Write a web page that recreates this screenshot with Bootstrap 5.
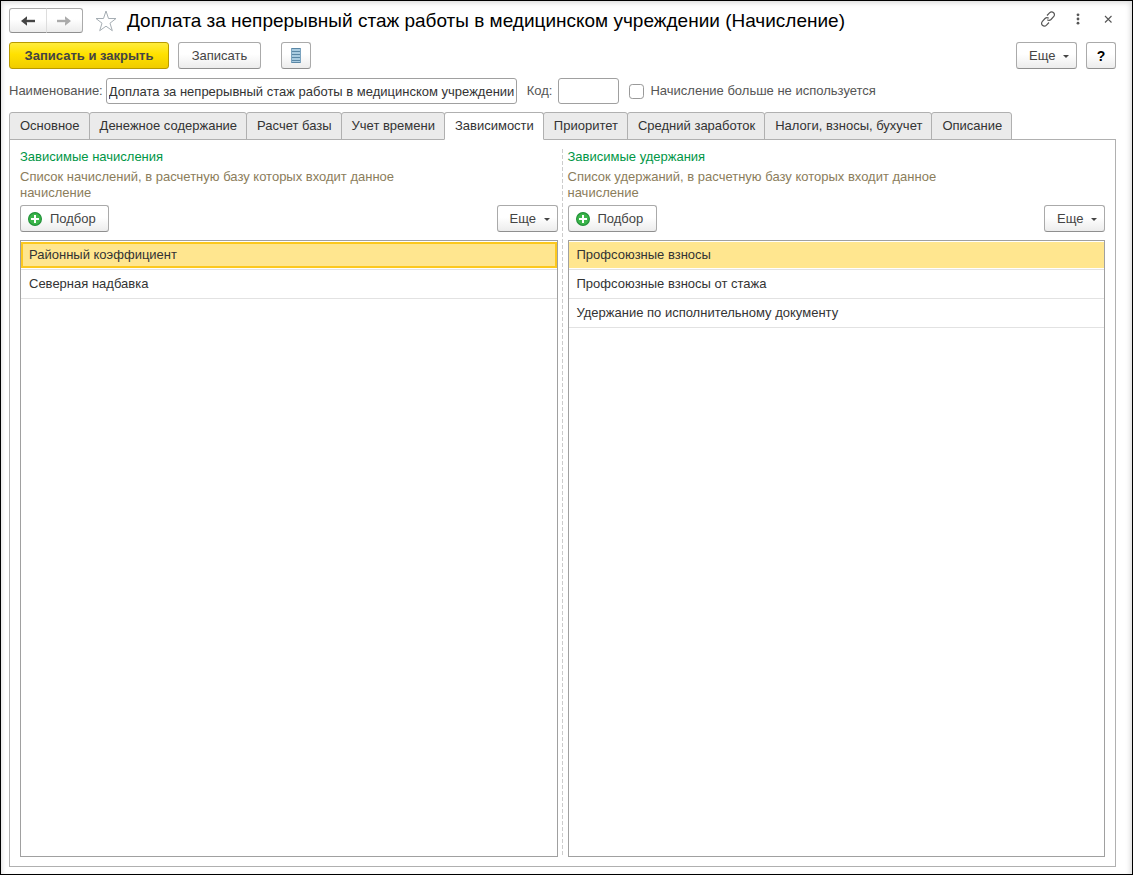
<!DOCTYPE html>
<html lang="ru">
<head>
<meta charset="utf-8">
<meta name="viewport" content="width=device-width, initial-scale=1">
<title>Доплата за непрерывный стаж работы (Начисление)</title>
<link href="https://cdn.jsdelivr.net/npm/bootstrap@5.3.0/dist/css/bootstrap.min.css" rel="stylesheet">
<style>
body { font: 13px/16px "Liberation Sans", Arial, sans-serif; color: #333; background: #fff; padding-bottom: 1px; }
.app-window { min-height: calc(100vh - 1px); border: 1px solid #000; padding: 7px 16px 7px 8px; box-shadow: inset -4px 4px 5px -2px #ddd, inset 3px 0 4px -2px #ddd; }
.title-row { height: 25px; margin-bottom: 9px; }
.title-row h1 { font-size: 19px; line-height: 24px; color: #000; margin-left: 10px; }
.command-bar { gap: 9px; margin-bottom: 9px; }
.form-btn { --bs-btn-font-size: 13px; --bs-btn-line-height: 16px; --bs-btn-border-radius: 3px; --bs-btn-color: #444; --bs-btn-border-color: #aaa; --bs-btn-hover-color: #222; --bs-btn-hover-border-color: #888;
  height: 27px; padding: 0 12px; background: linear-gradient(#fff 45%, #ececec); border-bottom-color: #8f8f8f; display: inline-flex; align-items: center; justify-content: center; white-space: nowrap; }
.form-btn.primary-cmd { background: linear-gradient(#ffec3d, #ffe100 45%, #f0cc00); border-color: #b89a00; color: #444; font-weight: 700; width: 160px; padding: 0; }
.nav-pair { width: 74px; }
.nav-pair .form-btn { height: 25px; padding: 0; }
.nav-pair .form-btn + .form-btn { border-left-color: #ddd; }
.save-btn { width: 83px; }
.square-btn { width: 30px; padding: 0; }
.help-btn { --bs-btn-font-size: 14px; }
.list-btn { margin-left: 11px; }
.more-btn { width: 61px; padding: 0 7px 0 12px; justify-content: space-between; }
.more-btn::after { border-width: 3px 3px 0; margin: 2px 0 0; color: #444; }
.pick-btn { width: 89px; padding: 0 7px; justify-content: flex-start; gap: 8px; }
.bare-btn { border: 0; background: none; padding: 0; line-height: 0; color: #555; }
.field-row { column-gap: 10px; }
.form-label, .form-check-label { color: #555; }
.field-box { height: 26px; padding: 0 0 0 2px; border: 1px solid #a0a0a0; border-radius: 3px; font-size: 13px; color: #333; min-height: 0; }
.name-box { width: 411px; margin-left: 3px; }
.code-box { width: 61px; margin-left: 6px; }
.tick-box { width: 15px; height: 15px; border-color: #999; border-radius: 2px; margin: 0 6px 0 0; }
.nav-tabs.form-tabs { --bs-nav-tabs-border-width: 0; }
.form-tabs .nav-link { height: 28px; padding: 0 9px 0 10px; border: 1px solid #b0b0b0; border-radius: 3px 3px 0 0; background: #ebebeb; color: #333; line-height: 26px; white-space: nowrap; margin: 0 0 -1px; }
.form-tabs .nav-item + .nav-item { margin-left: -1px; }
.form-tabs .nav-link.active { background: #fff; color: #333; border-color: #b0b0b0 #b0b0b0 #fff; position: relative; }
.tab-panel { border: 1px solid #b0b0b0; padding: 9px 10px; }
.divider { width: 10px; background: repeating-linear-gradient(#ccc 0 4px, #fff 4px 6px) 4px 0 / 1px 100% no-repeat; }
.pane { min-width: 0; }
.pane h2 { font-size: 13px; line-height: 16px; color: #009646; }
.hint { color: #8b7d5b; max-width: 400px; }
.list-frame { border: 1px solid #a0a0a0; }
.list-frame table { border-collapse: separate; border-spacing: 0; }
.list-frame td { height: 29px; padding: 0 8px; border-bottom: 1px solid #e2e2e2; }
.list-frame td.picked { padding: 1px 0; }
.picked div { height: 26px; line-height: 26px; padding: 0 8px; background: #ffe68f; }
.picked .has-focus { border: 2px solid #fcc81e; line-height: 22px; padding: 0 6px; }
</style>
</head>
<body>
<svg class="d-none">
  <symbol id="plus-icon" viewBox="0 0 14 14"><circle cx="7" cy="7" r="6.4" fill="#3bb54a" stroke="#23923a" stroke-width="1.2"/><path d="M7 3v8M3 7h8" stroke="#fff" stroke-width="2"/></symbol>
</svg>
<main class="app-window d-flex flex-column">
  <header class="title-row d-flex align-items-center">
    <div class="btn-group nav-pair">
      <button type="button" class="btn form-btn" aria-label="Назад"><svg width="16" height="12" viewBox="0 0 16 12"><path d="M5 6h10" stroke="#444" stroke-width="2.400"/><path d="M1 6l6-4.800v3L5.500 6 7 7.800v3z" fill="#444"/></svg></button>
      <button type="button" class="btn form-btn" aria-label="Вперед"><svg width="16" height="12" viewBox="0 0 16 12"><path d="M1 6h10" stroke="#aaa" stroke-width="2.400"/><path d="M15 6L9 1.200v3L10.500 6 9 7.800v3z" fill="#aaa"/></svg></button>
    </div>
    <button type="button" class="bare-btn ms-2 ps-1" aria-label="В избранное"><svg width="22" height="22" viewBox="0 0 22 22"><path d="M11 1l2.500 7.500H21l-6 4.700 2.300 7.500L11 16.200l-6.300 4.500L7 13.200 1 8.500h7.500z" fill="none" stroke="#a5adb3"/></svg></button>
    <h1 class="mb-0 fw-normal text-nowrap me-auto">Доплата за непрерывный стаж работы в медицинском учреждении (Начисление)</h1>
    <div class="d-flex align-items-center gap-3 pe-1 pb-1">
      <button type="button" class="bare-btn" aria-label="Ссылка"><svg width="16" height="16" viewBox="0 0 16 16" fill="none" stroke="#555" stroke-width="1.200"><path d="M7 4.500l2.500-2.600c1.200-1.200 3-1.200 4.100-.2s1.100 2.800 0 4L11 8.500c-1 1-2.600 1.100-3.700.3M9 11.500l-2.500 2.600c-1.200 1.200-3 1.200-4.100.2s-1.100-2.800 0-4L5 7.500c1-1 2.600-1.100 3.700-.3"/></svg></button>
      <button type="button" class="bare-btn px-1" aria-label="Меню"><svg width="4" height="12" viewBox="0 0 4 12" fill="#555"><circle cx="2" cy="1.800" r="1.400"/><circle cx="2" cy="6" r="1.400"/><circle cx="2" cy="10.200" r="1.400"/></svg></button>
      <button type="button" class="bare-btn ps-1" aria-label="Закрыть"><svg width="8" height="8" viewBox="0 0 8 8"><path d="M1 1l6.500 6.500M7.500 1L1 7.500" stroke="#555" stroke-width="1.100"/></svg></button>
    </div>
  </header>

  <div class="command-bar d-flex align-items-center">
    <button type="button" class="btn form-btn primary-cmd">Записать и закрыть</button>
    <button type="button" class="btn form-btn save-btn">Записать</button>
    <button type="button" class="btn form-btn square-btn list-btn me-auto" aria-label="Список"><svg width="12" height="15" viewBox="0 0 12 15"><path d="M1 0h10v15H1z" fill="#a9cbe0"/><path d="M1 .5h10M1 3.500h10M1 6.500h10M1 9.500h10M1 12.500h10M1 14.500h10" stroke="#5a87a5"/><path d="M1.500 0v15M10.500 0v15" stroke="#7ba3bf"/></svg></button>
    <button type="button" class="btn form-btn more-btn dropdown-toggle">Еще</button>
    <button type="button" class="btn form-btn square-btn help-btn fw-bold text-black">?</button>
  </div>

  <form class="field-row d-flex align-items-center mb-2">
    <div class="d-flex align-items-center">
      <label class="form-label mb-0" for="name">Наименование:</label>
      <input class="form-control field-box name-box" id="name" value="Доплата за непрерывный стаж работы в медицинском учреждении">
    </div>
    <div class="d-flex align-items-center">
      <label class="form-label mb-0" for="code">Код:</label>
      <input class="form-control field-box code-box" id="code">
    </div>
    <div class="d-flex align-items-center">
      <input class="form-check-input tick-box" type="checkbox" id="unused">
      <label class="form-check-label" for="unused">Начисление больше не используется</label>
    </div>
  </form>

  <ul class="nav nav-tabs form-tabs flex-nowrap" role="tablist">
    <li class="nav-item"><button type="button" class="nav-link" role="tab">Основное</button></li>
    <li class="nav-item"><button type="button" class="nav-link" role="tab">Денежное содержание</button></li>
    <li class="nav-item"><button type="button" class="nav-link" role="tab">Расчет базы</button></li>
    <li class="nav-item"><button type="button" class="nav-link" role="tab">Учет времени</button></li>
    <li class="nav-item"><button type="button" class="nav-link active" role="tab" aria-selected="true">Зависимости</button></li>
    <li class="nav-item"><button type="button" class="nav-link" role="tab">Приоритет</button></li>
    <li class="nav-item"><button type="button" class="nav-link" role="tab">Средний заработок</button></li>
    <li class="nav-item"><button type="button" class="nav-link" role="tab">Налоги, взносы, бухучет</button></li>
    <li class="nav-item"><button type="button" class="nav-link" role="tab">Описание</button></li>
  </ul>

  <div class="tab-panel d-flex flex-grow-1">
    <section class="pane d-flex flex-column flex-fill w-50">
      <h2 class="mb-1 fw-normal">Зависимые начисления</h2>
      <p class="hint mb-1">Список начислений, в расчетную базу которых входит данное начисление</p>
      <div class="d-flex justify-content-between mb-2">
        <button type="button" class="btn form-btn pick-btn"><svg width="14" height="14"><use href="#plus-icon"/></svg>Подбор</button>
        <button type="button" class="btn form-btn more-btn dropdown-toggle">Еще</button>
      </div>
      <div class="list-frame flex-grow-1">
        <table class="w-100">
          <tbody>
            <tr><td class="picked"><div class="has-focus">Районный коэффициент</div></td></tr>
            <tr><td>Северная надбавка</td></tr>
          </tbody>
        </table>
      </div>
    </section>
    <div class="divider flex-shrink-0"></div>
    <section class="pane d-flex flex-column flex-fill w-50">
      <h2 class="mb-1 fw-normal">Зависимые удержания</h2>
      <p class="hint mb-1">Список удержаний, в расчетную базу которых входит данное начисление</p>
      <div class="d-flex justify-content-between mb-2">
        <button type="button" class="btn form-btn pick-btn"><svg width="14" height="14"><use href="#plus-icon"/></svg>Подбор</button>
        <button type="button" class="btn form-btn more-btn dropdown-toggle">Еще</button>
      </div>
      <div class="list-frame flex-grow-1">
        <table class="w-100">
          <tbody>
            <tr><td class="picked"><div>Профсоюзные взносы</div></td></tr>
            <tr><td>Профсоюзные взносы от стажа</td></tr>
            <tr><td>Удержание по исполнительному документу</td></tr>
          </tbody>
        </table>
      </div>
    </section>
  </div>
</main>
<script src="https://cdn.jsdelivr.net/npm/bootstrap@5.3.0/dist/js/bootstrap.bundle.min.js"></script>
</body>
</html>
